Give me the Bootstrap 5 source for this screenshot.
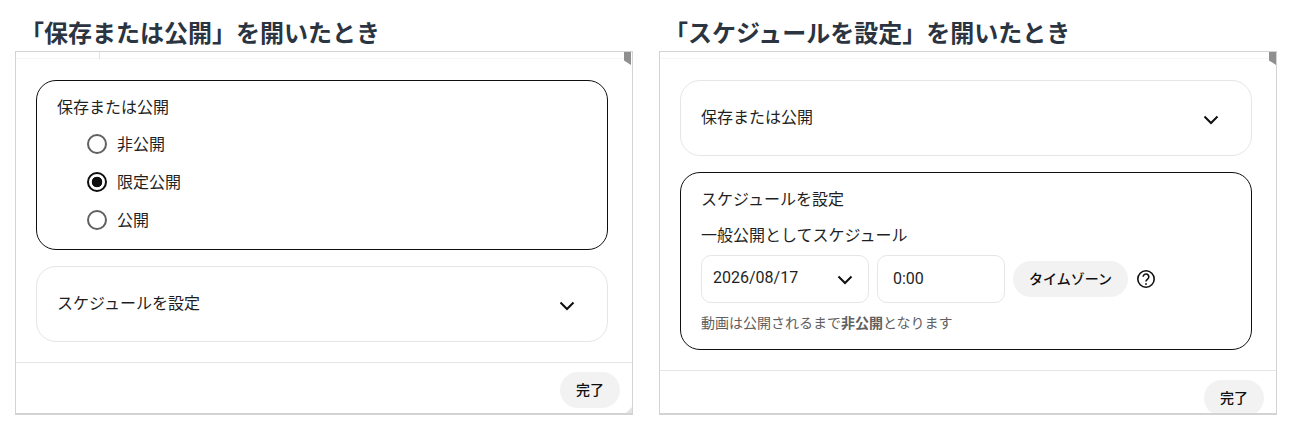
<!DOCTYPE html>
<html lang="ja">
<head>
<meta charset="utf-8">
<title>公開設定</title>
<link href="https://cdn.jsdelivr.net/npm/bootstrap@5.3.0/dist/css/bootstrap.min.css" rel="stylesheet">
<style>
html,body{height:430px;overflow:hidden;background:#fff}
body{font-family:Roboto,"Noto Sans CJK JP",sans-serif;color:#0f0f0f;padding:0 15px;font-size:16px}
.stage{gap:26px}
.pane-col{width:618px;flex:none}
.pane-title{font-family:Inter,"Noto Sans CJK JP",sans-serif;font-size:24px;line-height:32px;font-weight:700;color:#2b3441;margin:18px 0 1px 5px;white-space:nowrap}
.dialog{position:relative;height:364px;border:1px solid #d3d3d3;border-bottom-width:2px;overflow:hidden;background:#fff}
.topstrip{height:7px;border-bottom:1px solid #f6f6f6}
.topstrip-tab{width:84px;height:7px;border-right:1px solid #e2e2e2}
.corner{position:absolute;top:0;right:1px;width:7px;height:13px;background:#8f8f8f;clip-path:polygon(0 0,100% 0,100% 100%,0 65%)}
.second .corner{right:0}
.corner-low{position:absolute;right:0;bottom:0;width:6px;height:6px;background:#e4e4e4;clip-path:polygon(100% 0,100% 100%,0 100%)}
.dialog-body{padding:21px 24px 0 20px;height:303px}
.second .dialog-body{height:311px}
.sect{border:1px solid #e6e6e6;border-radius:20px;margin-bottom:16px;padding:0 20px}
.sect-closed{height:76px}
.sect-closed .sect-name{padding-bottom:2px}
.sect-closed .chev{margin-top:3px}
.sect-open{border-color:#0f0f0f}
.sect-name{font-size:16px;line-height:21px;color:#1f1f1f}
.sect-open.radios{height:170px;padding-top:16px}
.sect-open.sched{height:178px;padding-top:16px}
.chev{width:16px;height:10px;margin-right:12px}
.opt{margin:0 0 0 30px;height:38px;padding:0}
.radios .sect-name{margin-bottom:7px}
.opt .form-check-input{width:20px;height:20px;margin:0 10px 0 0;float:none;background-color:#fff;border:2px solid #606060;flex:none}
.opt .form-check-input:checked{border-color:#0f0f0f;background-color:#fff;background-image:radial-gradient(circle,#0f0f0f 0 5px,transparent 5.6px)}
.opt .form-check-input:focus{box-shadow:none}
.opt .form-check-label{font-size:16px;color:#1f1f1f;line-height:20px;opacity:1;padding-top:2px}
.sub-title{font-size:16px;line-height:22px;color:#1f1f1f;margin-top:15px}
.fields{gap:8px;margin-top:8px}
.fld{height:48px;border:1px solid #e6e6e6;border-radius:10px;font-size:16px;color:#1f1f1f}
.fld-date{width:168px;padding:0 15px 0 11px}
.fld-date span{padding-bottom:2px}
.fld-time{width:128px;padding:0 15px}
.fld-date .chev{margin-top:2px!important}
.pill{background:#f2f2f2;border:0;border-radius:18px;color:#0f0f0f;font-size:14px;font-weight:500;line-height:20px;padding:0}
.pill-zone{width:115px;height:36px}
.pill-done{width:60px;height:36px}
.help{width:20px;height:20px}
.note{font-size:14px;line-height:20px;color:#606060;margin-top:10px}
.note b{font-weight:700}
.foot{border-top:1px solid #e6e6e6;padding:9px 12px 0 0;height:53px}
</style>
</head>
<body>
<div class="d-flex stage">
  <section class="pane-col">
    <h2 class="pane-title">「保存または公開」を開いたとき</h2>
    <div class="dialog">
      <div class="topstrip"><div class="topstrip-tab"></div></div>
      <div class="corner"></div>
      <div class="corner-low"></div>
      <div class="dialog-body">
        <div class="sect sect-open radios">
          <div class="sect-name">保存または公開</div>
          <div class="form-check opt d-flex align-items-center"><input class="form-check-input" type="radio" name="vis1" id="a1"><label class="form-check-label" for="a1">非公開</label></div>
          <div class="form-check opt d-flex align-items-center"><input class="form-check-input" type="radio" name="vis1" id="a2" checked><label class="form-check-label" for="a2">限定公開</label></div>
          <div class="form-check opt d-flex align-items-center"><input class="form-check-input" type="radio" name="vis1" id="a3"><label class="form-check-label" for="a3">公開</label></div>
        </div>
        <div class="sect sect-closed d-flex align-items-center justify-content-between">
          <span class="sect-name">スケジュールを設定</span>
          <svg class="chev" viewBox="0 0 16 10" fill="none" stroke="#0f0f0f" stroke-width="2"><path d="M1.5 1.5 8 8l6.5-6.5"/></svg>
        </div>
      </div>
      <div class="foot d-flex justify-content-end"><button class="btn pill pill-done" type="button">完了</button></div>
    </div>
  </section>
  <section class="pane-col second">
    <h2 class="pane-title">「スケジュールを設定」を開いたとき</h2>
    <div class="dialog">
      <div class="topstrip"></div>
      <div class="corner"></div>
      <div class="dialog-body">
        <div class="sect sect-closed d-flex align-items-center justify-content-between">
          <span class="sect-name">保存または公開</span>
          <svg class="chev" viewBox="0 0 16 10" fill="none" stroke="#0f0f0f" stroke-width="2"><path d="M1.5 1.5 8 8l6.5-6.5"/></svg>
        </div>
        <div class="sect sect-open sched">
          <div class="sect-name">スケジュールを設定</div>
          <div class="sub-title">一般公開としてスケジュール</div>
          <div class="d-flex align-items-center fields">
            <div class="fld fld-date d-flex align-items-center justify-content-between"><span>2026/08/17</span><svg class="chev m-0" viewBox="0 0 16 10" fill="none" stroke="#0f0f0f" stroke-width="2"><path d="M1.5 1.5 8 8l6.5-6.5"/></svg></div>
            <div class="fld fld-time d-flex align-items-center">0:00</div>
            <button class="btn pill pill-zone" type="button">タイムゾーン</button>
            <svg class="help" viewBox="0 0 20 20" fill="none" stroke="#0f0f0f" stroke-width="1.6"><circle cx="10" cy="10" r="8.2"/><path d="M7.2 7.8a2.8 2.8 0 1 1 4.4 2.3c-1 .7-1.6 1.2-1.6 2.4"/><circle cx="10" cy="15" r=".6" fill="#0f0f0f" stroke-width=".8"/></svg>
          </div>
          <div class="note">動画は公開されるまで<b>非公開</b>となります</div>
        </div>
      </div>
      <div class="foot d-flex justify-content-end"><button class="btn pill pill-done" type="button">完了</button></div>
    </div>
  </section>
</div>
<script src="https://cdn.jsdelivr.net/npm/bootstrap@5.3.0/dist/js/bootstrap.bundle.min.js"></script>
</body>
</html>
